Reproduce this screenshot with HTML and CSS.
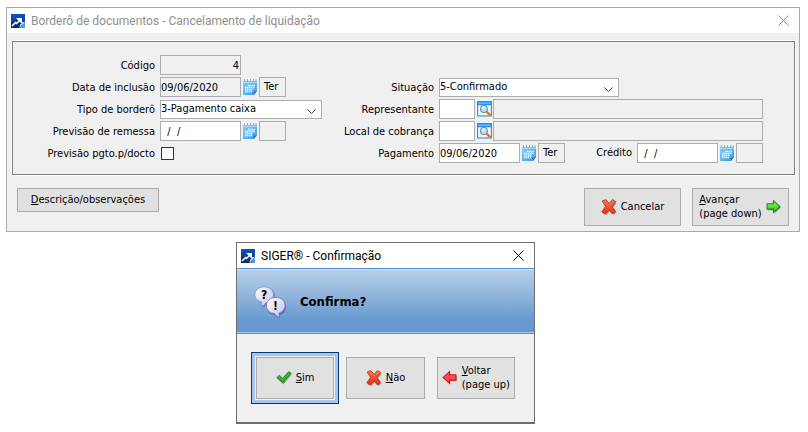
FILE: index.html
```html
<!DOCTYPE html>
<html lang="pt-BR">
<head>
  <meta charset="UTF-8">
  <meta name="viewport" content="width=device-width, initial-scale=1.0">
  <title>Borderô de documentos</title>
  <link rel="stylesheet" href="styles.css">
</head>
<body>
  <svg class="sprite" aria-hidden="true">
    <defs>
      <linearGradient id="g-navy" x1="0" y1="0" x2="0" y2="1">
        <stop offset="0" stop-color="#0c56bc"/>
        <stop offset="1" stop-color="#0a2a66"/>
      </linearGradient>
      <linearGradient id="g-sky" x1="0" y1="0" x2="1" y2="1">
        <stop offset="0" stop-color="#86d2f6"/>
        <stop offset="1" stop-color="#3c98dc"/>
      </linearGradient>
      <linearGradient id="g-red" x1="0" y1="0" x2="0" y2="1">
        <stop offset="0" stop-color="#ff7a52"/>
        <stop offset="1" stop-color="#e03214"/>
      </linearGradient>
      <linearGradient id="g-green" x1="0" y1="0" x2="0" y2="1">
        <stop offset="0" stop-color="#8cf25c"/>
        <stop offset="1" stop-color="#2fc41c"/>
      </linearGradient>
      <linearGradient id="g-bubble" x1="0" y1="0" x2="1" y2="1">
        <stop offset="0" stop-color="#ffffff"/>
        <stop offset="1" stop-color="#c0c0f0"/>
      </linearGradient>
    </defs>
    <symbol id="i-app" viewBox="0 0 14 14">
      <rect width="14" height="14" fill="url(#g-navy)"/>
      <path d="M8 14 14 7v7z" fill="#5f8fd0"/>
      <path d="M9 13l1-3 1 1 1-3 1 2" stroke="#c8dcf4" fill="none"/>
      <path d="M1 12 4.500 8.500 5.500 9.500 10 5" stroke="#fff" stroke-width="1.500" fill="none"/>
      <path d="M5 4h6v6z" fill="#fff"/>
    </symbol>
    <symbol id="i-calendar" viewBox="0 0 15 16">
      <path d="M0 2h14v10l-3 4H0z" fill="url(#g-sky)"/>
      <path d="M14 12l-3 4-1-3z" fill="#2a7ccc"/>
      <path d="M1.500 0v3M4.500 0v3M7.500 0v3M10.500 0v3M13 0v3" stroke="#6cbcec"/>
      <path d="M0 3.500h14" stroke="#a8dcf8"/>
      <path d="M5 6.500h7M2 8.500h10M2 10.500h8M2 12.500h7" stroke="#fff" stroke-width="1.300" stroke-dasharray="1.400 .6"/>
    </symbol>
    <symbol id="i-search" viewBox="0 0 14 15">
      <rect x=".5" y=".5" width="13" height="13.500" fill="#eef4fa" stroke="#2191f2"/>
      <path d="M0 0h14v4H0z" fill="#2191f2"/>
      <path d="M1 2h12" stroke="#8dcbfa"/>
      <path d="M9 10l3.500 3.500" stroke="#e07a20" stroke-width="2.200"/>
      <circle cx="6.500" cy="7.500" r="3.200" fill="#b4e4f8" stroke="#7d8796"/>
      <path d="M5 7q.5-1.500 2-1.500" stroke="#fff" fill="none"/>
    </symbol>
    <symbol id="i-cross" viewBox="0 0 16 16">
      <path d="M3 3 6 2 9 5 12.500 2l3 2-3.500 4.500 3.500 5-3 2.500L9 12 5.500 16 1.500 14.500l4-6z" fill="#5d5d5d" opacity=".6"/>
      <path d="M1.200 2 4.800.6 8 4.500 11.500.6l3.300 2L10.800 7.500l3.700 4.800-3.300 2.500L8 10.800 4.200 14.800.8 12.800 4.500 7.500z" fill="url(#g-red)" stroke="#c0240e" stroke-width=".8"/>
    </symbol>
    <symbol id="i-next" viewBox="0 0 15 14">
      <path d="M2 5h6V2l6 5.500L8 13v-3H2z" fill="#555" opacity=".6"/>
      <path d="M1 4h6V1l6 5.500L7 12V9H1z" fill="url(#g-green)" stroke="#1c8a18"/>
    </symbol>
    <symbol id="i-prev" viewBox="0 0 15 14">
      <path d="M14 5H8V2L2 7.500 8 13v-3h6z" fill="#555" opacity=".5"/>
      <path d="M13 4H7V1L1 6.500 7 12V9h6z" fill="#ff4a52" stroke="#d0101c"/>
    </symbol>
    <symbol id="i-check" viewBox="0 0 16 14">
      <path d="M1 7.500 4 5l3 3.500L13.500 1 16 3 7.500 13.500z" fill="#555" opacity=".5"/>
      <path d="M.8 6.500 3.500 4.200 6.300 7.500 12.800.6l2.200 1.600L6.800 11.800z" fill="#35b32a" stroke="#16801a" stroke-width=".8"/>
    </symbol>
    <symbol id="i-close" viewBox="0 0 11 11">
      <path d="M.5.5l10 10M10.500.5l-10 10" stroke="currentColor" fill="none"/>
    </symbol>
    <symbol id="i-bubbles" viewBox="0 0 32 32">
      <path d="M11 2c6 0 10 3.500 10 8s-4 8-8 8.500q-2 2.500-5 2.500 1-2 .5-4C5 16 2 13 2 9.500 2 5 6 2 11 2z" fill="#30507e" opacity=".5"/>
      <path d="M10 1c5.500 0 9.500 3.200 9.500 8s-4 8-8 8q-1.500 3-4.500 3 1-2 .5-4C4 15 1 12.500 1 8.500 1 4.200 4.800 1 10 1z" fill="url(#g-bubble)" stroke="#8080b4" stroke-width=".6"/>
      <path d="M23 13c5 0 9 3.200 9 8 0 4-2.500 7-6 8l0 3q-3 0-5-3c-5 0-8-4-8-8z" fill="#30507e" opacity=".5"/>
      <path d="M22 11.500c5.500 0 9 3.400 9 7.900 0 3.800-2.500 6.600-6 7.600q0 2.500 1 4-4-.3-5.500-3.600c-4.500 0-8-3.500-8-8s4-7.900 9.500-7.900z" fill="url(#g-bubble)" stroke="#7070a8" stroke-width=".7"/>
    </symbol>
  </svg>

  <main class="window">
    <header class="titlebar">
      <svg class="app-icon"><use href="#i-app"/></svg>
      <h1>Borderô de documentos - Cancelamento de liquidação</h1>
      <button type="button" class="close" aria-label="Fechar"><svg><use href="#i-close"/></svg></button>
    </header>

    <form class="panel">
      <div class="column column-left">
        <label for="codigo">Código</label>
        <div class="field"><input id="codigo" class="date num" value="4" readonly></div>

        <label for="inclusao">Data de inclusão</label>
        <div class="field">
          <input id="inclusao" class="date" value="09/06/2020" readonly>
          <button type="button" class="pick" aria-label="Calendário"><svg><use href="#i-calendar"/></svg></button>
          <output class="weekday">Ter</output>
        </div>

        <label for="tipo">Tipo de borderô</label>
        <div class="field"><select id="tipo"><option>3-Pagamento caixa</option></select></div>

        <label for="remessa">Previsão de remessa</label>
        <div class="field">
          <input id="remessa" class="date" value="  /  /">
          <button type="button" class="pick" aria-label="Calendário"><svg><use href="#i-calendar"/></svg></button>
          <output class="weekday"></output>
        </div>

        <label for="pgto">Previsão pgto.p/docto</label>
        <div class="field"><input id="pgto" type="checkbox"></div>
      </div>

      <div class="column column-right">
        <label for="situacao">Situação</label>
        <div class="field"><select id="situacao" class="wide"><option>5-Confirmado</option></select></div>

        <label for="representante">Representante</label>
        <div class="field">
          <input id="representante" class="code">
          <button type="button" class="pick" aria-label="Pesquisar"><svg><use href="#i-search"/></svg></button>
          <output class="name"></output>
        </div>

        <label for="local">Local de cobrança</label>
        <div class="field">
          <input id="local" class="code">
          <button type="button" class="pick" aria-label="Pesquisar"><svg><use href="#i-search"/></svg></button>
          <output class="name"></output>
        </div>

        <label for="pagamento">Pagamento</label>
        <div class="field">
          <input id="pagamento" class="date" value="09/06/2020">
          <button type="button" class="pick" aria-label="Calendário"><svg><use href="#i-calendar"/></svg></button>
          <output class="weekday">Ter</output>
          <label class="inner-label" for="credito">Crédito</label>
          <input id="credito" class="date" value="  /  /">
          <button type="button" class="pick" aria-label="Calendário"><svg><use href="#i-calendar"/></svg></button>
          <output class="weekday"></output>
        </div>
      </div>
    </form>

    <footer class="actions">
      <button type="button" class="btn btn-notes"><span><u>D</u>escrição/observações</span></button>
      <button type="button" class="btn btn-big"><svg class="icon"><use href="#i-cross"/></svg><span>Cancelar</span></button>
      <button type="button" class="btn btn-big"><span><u>A</u>vançar<br>(page down)</span><svg class="icon"><use href="#i-next"/></svg></button>
    </footer>
  </main>

  <section class="window dialog" role="dialog" aria-labelledby="dialog-title">
    <header class="titlebar">
      <svg class="app-icon"><use href="#i-app"/></svg>
      <h2 id="dialog-title">SIGER® - Confirmação</h2>
      <button type="button" class="close" aria-label="Fechar"><svg><use href="#i-close"/></svg></button>
    </header>
    <div class="banner">
      <svg class="bubbles" viewBox="0 0 32 32">
        <use href="#i-bubbles"/>
        <text x="7" y="13">?</text>
        <text x="19" y="24">!</text>
      </svg>
      <p>Confirma?</p>
    </div>
    <div class="choices">
      <button type="button" class="btn btn-choice is-default"><svg class="icon"><use href="#i-check"/></svg><span><u>S</u>im</span></button>
      <button type="button" class="btn btn-choice"><svg class="icon"><use href="#i-cross"/></svg><span><u>N</u>ão</span></button>
      <button type="button" class="btn btn-choice"><svg class="icon"><use href="#i-prev"/></svg><span><u>V</u>oltar<br>(page up)</span></button>
    </div>
  </section>
</body>
</html>
```
FILE: styles.css
```css
* {
  box-sizing: border-box;
}
body, h1, h2, p {
  margin: 0;
}
body {
  padding: 7px 8px 0 6px;
  background-color: #fff;
  color: #000;
  font-family: Tahoma, "DejaVu Sans Condensed", "Noto Sans", sans-serif;
  font-size: 11px;
  line-height: 14px;
}
button, input, select {
  margin: 0;
  padding: 0;
  border-radius: 0;
  font: inherit;
  color: inherit;
}
.sprite {
  position: absolute;
  width: 0;
  height: 0;
}

/* janelas */
.window {
  border: 1px solid #a9a9a9;
  background-color: #f0f0f0;
}
.titlebar {
  display: flex;
  align-items: center;
  height: 25px;
  padding: 0 10px 0 4px;
  background-color: #fff;
  color: #8e8e8e;
}
.titlebar h1, .titlebar h2 {
  flex: 1;
  margin-left: 6px;
  font-family: "Segoe UI", Roboto, sans-serif;
  font-size: 12px;
  font-weight: 400;
  line-height: 16px;
}
.app-icon {
  width: 14px;
  height: 14px;
}
.close {
  display: flex;
  border: 0;
  background: none;
}
.close svg {
  width: 11px;
  height: 11px;
}

/* formulário */
.panel {
  display: flex;
  margin: 8px 4px 0 5px;
  padding: 12px 31px 10px 0;
  border: 1px solid #808080;
  outline: 1px solid #fff;
}
.column {
  display: grid;
  grid-auto-rows: 22px;
  align-content: start;
  align-items: center;
  column-gap: 5px;
}
.column > label {
  padding-top: 2px;
  text-align: right;
}
.column-left {
  grid-template-columns: 142px 162px;
}
.column-right {
  flex: 1;
  grid-template-columns: 112px 1fr;
  padding-top: 22px;
}
.field {
  display: flex;
  align-items: center;
}
.field input, .field select, .field output {
  height: 20px;
  border: 1px solid #abadb3;
  background-color: #fff;
}
.field input:read-only, .field output {
  background-color: #f0f0f0;
}
.field .date {
  width: 81px;
  white-space: pre;
}
.field .num {
  padding-right: 1px;
  text-align: right;
}
.field .code {
  width: 36px;
}
.field .weekday {
  width: 27px;
  padding: 2px 4px;
}
.field .name {
  flex: 1;
}
.field select {
  width: 162px;
  height: 19px;
  appearance: none;
  background: #fff url("data:image/svg+xml,%3Csvg xmlns='http://www.w3.org/2000/svg' width='9' height='6'%3E%3Cpath d='M.5 .5l4 4 4-4' fill='none' stroke='%23444'/%3E%3C/svg%3E") no-repeat right 5px top 8px;
}
.field select.wide {
  width: 180px;
}
.field input[type="checkbox"] {
  width: 13px;
  height: 13px;
  margin-left: 1px;
  appearance: none;
  border-color: #333;
  background-color: #fff;
}
.field input[type="checkbox"]:checked {
  background-color: #333;
}
.inner-label {
  margin: 0 5px 0 auto;
}
.pick {
  display: flex;
  margin: 0 1px 0 2px;
  border: 0;
  background: none;
}
.pick svg {
  width: 15px;
  height: 16px;
}

/* botões */
.btn {
  display: flex;
  align-items: center;
  justify-content: center;
  gap: 4px;
  border: 1px solid #adadad;
  background-color: #e1e1e1;
  text-align: left;
}
.btn .icon {
  flex: none;
  width: 16px;
  height: 16px;
}
.actions {
  display: flex;
  align-items: flex-start;
  gap: 11px;
  padding: 13px 10px 5px;
}
.btn-notes {
  width: 142px;
  height: 24px;
  margin-right: auto;
}
.btn-big {
  width: 97px;
  height: 38px;
}

/* confirmação */
.dialog {
  width: 299px;
  margin: 10px 0 0 230px;
  border-color: #6e6e6e;
  border-bottom-width: 2px;
}
.dialog .titlebar {
  color: #000;
}
.banner {
  display: flex;
  align-items: center;
  gap: 14px;
  height: 66px;
  padding: 2px 0 0 17px;
  border: solid #5b8fcb;
  border-width: 1px 0;
  background: linear-gradient(#b8d0e8, #8db2da 45%, #6699cf 80%, #6699cf);
  box-shadow: inset 0 -1px #a9cbec, inset 0 1px #cfdff0;
}
.banner p {
  font-size: 13px;
  font-weight: 700;
}
.bubbles {
  width: 32px;
  height: 32px;
}
.bubbles text {
  font-size: 12px;
  font-weight: 700;
}
.choices {
  display: flex;
  gap: 12px;
  padding: 23px 19px;
}
.btn-choice {
  width: 79px;
  height: 42px;
}
.is-default {
  outline: 1px solid #003c74;
  outline-offset: 4px;
  box-shadow: 0 0 0 1px #f0f0f0, 0 0 0 4px #a9c4ee;
}
```
